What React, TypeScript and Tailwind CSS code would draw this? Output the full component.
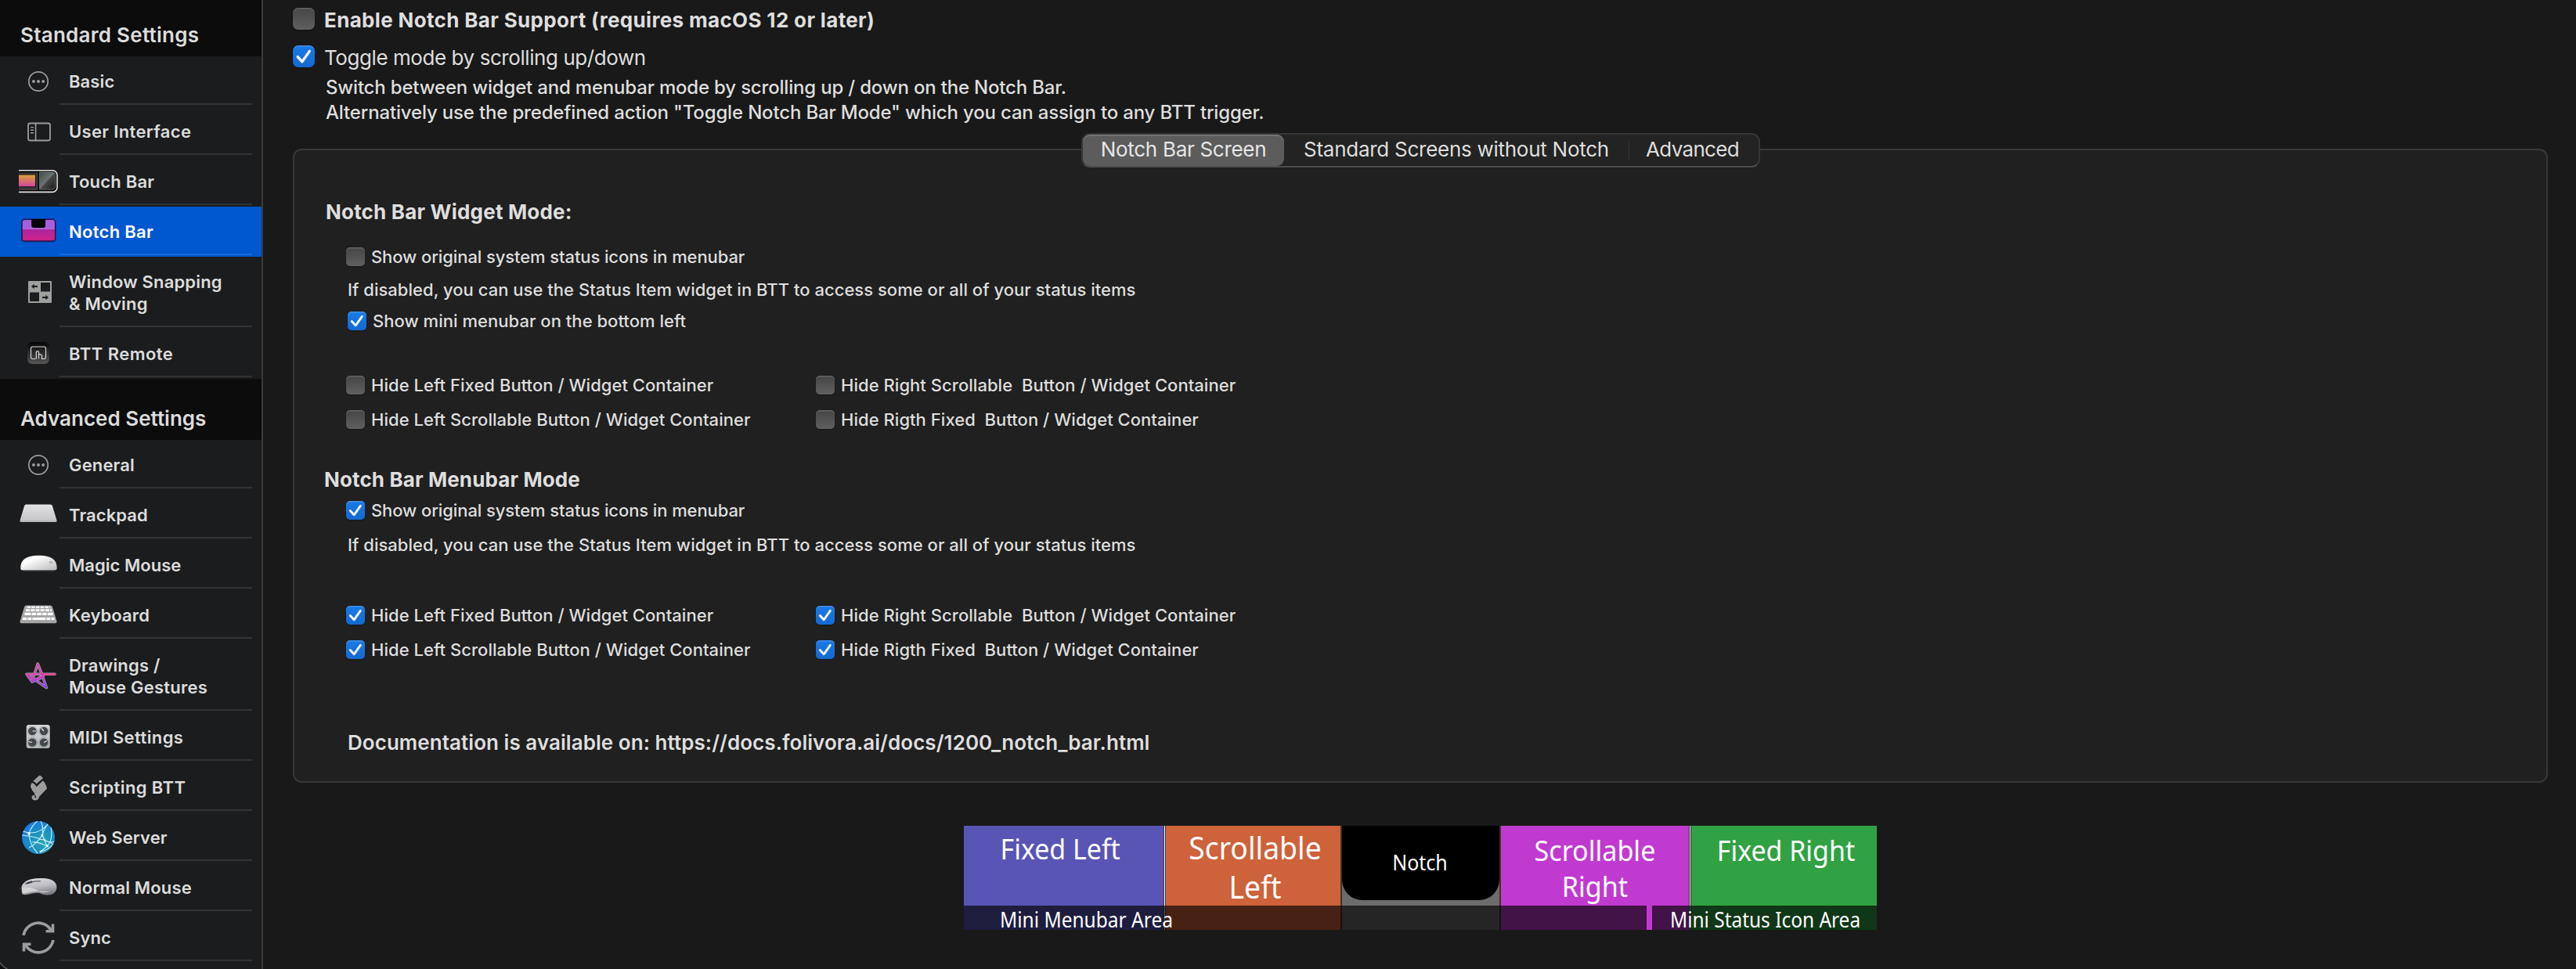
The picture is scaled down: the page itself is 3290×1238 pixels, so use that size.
import type { ReactNode } from "react";
import { clsx } from "clsx";

/* ---------- Sidebar icons, all drawn on a 50×50 grid ---------- */

function Icon({ children }: { children: ReactNode }) {
  return (
    <svg className="h-[50px] w-[50px] shrink-0" viewBox="0 0 50 50" fill="none">
      {children}
    </svg>
  );
}

const DotsIcon = () => (
  <Icon>
    <circle cx="25" cy="25" r="12.2" stroke="#9b9c9c" strokeWidth="1.7" />
    <circle cx="18.9" cy="25" r="2" fill="#9b9c9c" />
    <circle cx="25" cy="25" r="2" fill="#9b9c9c" />
    <circle cx="31.1" cy="25" r="2" fill="#9b9c9c" />
  </Icon>
);

const SidebarIcon = () => (
  <Icon>
    <rect x="12" y="14.5" width="28" height="22" rx="2.5" stroke="#9b9c9c" strokeWidth="1.8" />
    <path d="M21.6 14.5V36.5" stroke="#9b9c9c" strokeWidth="1.6" />
    <path d="M15 19.6h4M15 23.2h4M15 26.8h4" stroke="#9b9c9c" strokeWidth="1.4" />
  </Icon>
);

const TouchBarIcon = () => (
  <Icon>
    <defs>
      <linearGradient id="tb-strip" x1="0" y1="0" x2="0" y2="1">
        <stop offset="0" stopColor="#dca03c" />
        <stop offset="1" stopColor="#d2479c" />
      </linearGradient>
      <linearGradient id="tb-key" x1="0" y1="0" x2="1" y2="1">
        <stop offset="0" stopColor="#434a4b" />
        <stop offset=".48" stopColor="#687576" />
        <stop offset=".52" stopColor="#464646" />
        <stop offset="1" stopColor="#1c1c1c" />
      </linearGradient>
    </defs>
    <path d="M0 10.8H43a6 6 0 0 1 6 6V32.4a6 6 0 0 1-6 6H0Z" fill="#050505" />
    <path d="M0 10.8H43a6 6 0 0 1 6 6V32.4a6 6 0 0 1-6 6H0" stroke="#e4e4e4" strokeWidth="1.6" />
    <path d="M0 13.5H24.5V36H0Z" fill="#3a3a3a" />
    <path d="M0 15.5H22V32.3H0Z" fill="#111" />
    <path d="M0 16.5H21V31.2H0Z" fill="url(#tb-strip)" />
    <path d="M26.5 13H43a3.5 3.5 0 0 1 3.5 3.5V31.5a3.5 3.5 0 0 1-3.5 3.5H26.5Z" fill="url(#tb-key)" stroke="#777" strokeWidth=".8" />
  </Icon>
);

const NotchBarIcon = () => (
  <Icon>
    <defs>
      <linearGradient id="nb-body" x1="0" y1="0" x2="0" y2="1">
        <stop offset="0" stopColor="#8d2cb4" />
        <stop offset="1" stopColor="#cf2189" />
      </linearGradient>
    </defs>
    <rect x="3" y="10" width="44.5" height="29" rx="4" fill="#000" opacity=".25" />
    <rect x="4" y="9.3" width="42.6" height="27.6" rx="3.5" fill="url(#nb-body)" />
    <path d="M4 21V12.8a3.5 3.5 0 0 1 3.5-3.5H43.1a3.5 3.5 0 0 1 3.5 3.5V21Z" fill="#a35fdd" />
    <path d="M4.5 21.3H46" stroke="#c07ad8" strokeWidth="1" />
    <rect x="4" y="9.3" width="42.6" height="27.6" rx="3.5" stroke="#2c0f45" strokeWidth="1.4" />
    <path d="M16.2 9H34v8a3 3 0 0 1-3 3H19.2a3 3 0 0 1-3-3Z" fill="#000" />
  </Icon>
);

const SnappingIcon = () => (
  <Icon>
    <rect x="12" y="10" width="30" height="28" rx="1" fill="#9ea09e" />
    <rect x="28" y="12" width="12" height="11.5" fill="#1b1c1e" />
    <rect x="14" y="24.5" width="12" height="11.5" fill="#1b1c1e" />
    <path d="M16 17l3.6-3.2v2.3H24v1.8h-4.4v2.3ZM38 31l-3.6-3.2v2.3H30v1.8h4.4v2.3Z" fill="#1b1c1e" />
  </Icon>
);

const RemoteIcon = () => (
  <Icon>
    <defs>
      <linearGradient id="btt-bg" x1="0" y1="0" x2="0" y2="1">
        <stop offset="0" stopColor="#050505" />
        <stop offset="1" stopColor="#565656" />
      </linearGradient>
    </defs>
    <rect x="11" y="10" width="28" height="28" rx="6" fill="url(#btt-bg)" />
    <path
      d="M21.5 31.5H17.8a2.3 2.3 0 0 1-2.3-2.3V18.3a2.3 2.3 0 0 1 2.3-2.3H32.2a2.3 2.3 0 0 1 2.3 2.3V29.2a2.3 2.3 0 0 1-2.3 2.3H29.5V27.5c-.3-1.7-2-2-4-2.2V23c0-1.8-3.2-1.8-3.2 0v8.5M25.5 25.5v5.8"
      stroke="#d8d8d8"
      strokeWidth="1.2"
    />
  </Icon>
);

const TrackpadIcon = () => (
  <Icon>
    <defs>
      <linearGradient id="tp" x1="0" y1="0" x2="0" y2="1">
        <stop offset="0" stopColor="#e3e3e5" />
        <stop offset="1" stopColor="#c3c3c5" />
      </linearGradient>
    </defs>
    <path d="M9.5 11.5H40.5a2.5 2.5 0 0 1 2.4 1.7L48.4 31.5Q48.9 34 46.8 34H3.2Q1.1 34 1.6 31.5L7.1 13.2a2.5 2.5 0 0 1 2.4-1.7Z" fill="url(#tp)" />
    <path d="M1.8 33H48.2" stroke="#a5a5a5" strokeWidth="1.2" />
  </Icon>
);

const MagicMouseIcon = () => (
  <Icon>
    <defs>
      <linearGradient id="mm" x1="0" y1="0" x2="1" y2="1">
        <stop offset=".3" stopColor="#fdfdfd" />
        <stop offset="1" stopColor="#b9b9b9" />
      </linearGradient>
    </defs>
    <path d="M2.3 29.5C2 20 7 12.8 25.5 12.8S49 20 48.6 29.5Q48.5 31.5 46 31.5H5Q2.4 31.5 2.3 29.5Z" fill="url(#mm)" />
    <path d="M6 32H45" stroke="#6b6b6b" strokeWidth=".8" />
    <ellipse cx="41" cy="21.5" rx="2.3" ry="1.7" fill="#b4b4b4" />
  </Icon>
);

const KeyboardIcon = () => (
  <Icon>
    <path d="M9.5 12.5H40.5a2.5 2.5 0 0 1 2.4 1.7L48.4 32.5Q48.9 35.3 46.8 35.3H3.2Q1.1 35.3 1.6 32.5L7.1 14.2a2.5 2.5 0 0 1 2.4-1.7Z" fill="#a6a6a6" />
    <path d="M10.5 14.8H40" stroke="#fff" strokeWidth="2" strokeDasharray="4.6 1.1" />
    <path d="M9 18.7H42" stroke="#fff" strokeWidth="2.8" strokeDasharray="5 1.2" />
    <path d="M7.5 23.4H43.5" stroke="#fff" strokeWidth="3.4" strokeDasharray="8 1.2 5.5 1.2 5.5 1.2 5.5 1.2 9" />
    <path d="M5 29.6H45.5" stroke="#fff" strokeWidth="3" strokeDasharray="5 1.2 5 1.2 17 1.2 4.7 1.2 7" />
  </Icon>
);

const STAR = "M46 22.3H10L35.3 39.5L29.5 22.5L24.2 9L17 32L34 22.3M17 32L10 22.3M17 32L29.5 26.5";

const DrawingIcon = () => (
  <Icon>
    <defs>
      <linearGradient id="dr" x1="0" y1="8" x2="0" y2="40" gradientUnits="userSpaceOnUse">
        <stop offset="0" stopColor="#d93fae" />
        <stop offset=".45" stopColor="#d742b4" />
        <stop offset="1" stopColor="#7b3df0" />
      </linearGradient>
    </defs>
    <g strokeLinejoin="round" strokeLinecap="round">
      <path d={STAR} stroke="#cfc6d6" strokeWidth="3.6" opacity=".75" />
      <path d={STAR} stroke="url(#dr)" strokeWidth="2" />
      <path d="M31 22.3H46" stroke="#e04886" strokeWidth="2.3" />
    </g>
  </Icon>
);

const MidiIcon = () => (
  <Icon>
    <defs>
      <linearGradient id="midi" x1="0" y1="0" x2="0" y2="1">
        <stop offset="0" stopColor="#d6dadd" />
        <stop offset="1" stopColor="#b0b5b8" />
      </linearGradient>
    </defs>
    <rect x="9.7" y="9" width="30" height="30" rx="3" fill="url(#midi)" />
    <g stroke="#7b7f82" strokeWidth=".9" strokeDasharray="1 1">
      <circle cx="17.3" cy="17" r="6.3" />
      <circle cx="32" cy="17" r="6.3" />
      <circle cx="17.3" cy="31.5" r="6.3" />
      <circle cx="32" cy="31.5" r="6.3" />
    </g>
    <g fill="#44484b">
      <circle cx="17.3" cy="17" r="5.3" />
      <circle cx="32" cy="17" r="5.3" />
      <circle cx="17.3" cy="31.5" r="5.3" />
      <circle cx="32" cy="31.5" r="5.3" />
    </g>
    <path d="M17.5 17h4.5M32 17l-3-3.5M17 31.5l-4.5-.8M32 31.5l4-2" stroke="#e8e8e8" strokeWidth="1.2" />
  </Icon>
);

const ScriptIcon = () => (
  <Icon>
    <g fill="#9b9c9b">
      <path d="M18 17.3L25.5 10.3Q27 9.3 28.5 10.5L31 13.3L22.5 20.5Q20.5 17.3 18 17.3Z" />
      <path d="M17 19Q15 20.5 15 24Q16.5 29 20.5 33L19.5 35Q16.5 34.5 16.5 38Q17 41.5 21.5 41.5Q25.5 41 26 37L36 26.5Q34.5 19 30.5 16.5L22.5 24.5Q21 20.5 17 19Z" />
    </g>
    <path d="M19.7 35Q22.5 36 20.8 38.5" stroke="#1b1c1e" strokeWidth="1.2" />
  </Icon>
);

const GlobeIcon = () => (
  <Icon>
    <defs>
      <radialGradient id="globe" cx=".6" cy=".62" r=".65">
        <stop offset="0" stopColor="#2aa7b0" />
        <stop offset=".55" stopColor="#1a8fc0" />
        <stop offset="1" stopColor="#1b7be0" />
      </radialGradient>
      <clipPath id="globe-clip">
        <circle cx="25" cy="25" r="21" />
      </clipPath>
    </defs>
    <circle cx="25" cy="25" r="21" fill="url(#globe)" />
    <g clipPath="url(#globe-clip)" stroke="#c9f1fb" strokeWidth="1.1">
      <path d="M5 17Q24 24 38 7M4 22Q26 24 46 34M13 20Q14 35 24 45M13 20Q16 10 24 4M30 22Q32 12 28 4M30 22Q22 34 13 38M30 22Q34 34 46 30M30 22L36 36M36 36Q44 28 41 12M36 36Q24 30 17 31M36 36L28 43M38 7Q32 14 30 22M28 43Q38 41 43 34" />
    </g>
    <g fill="#fff">
      <circle cx="13" cy="20" r="1.7" />
      <circle cx="30" cy="22" r="1.5" />
      <circle cx="36.5" cy="36" r="1.5" />
      <circle cx="28" cy="43" r="1.5" />
    </g>
  </Icon>
);

const MouseIcon = () => (
  <Icon>
    <defs>
      <linearGradient id="nm" x1=".3" y1="0" x2=".6" y2="1">
        <stop offset="0" stopColor="#dcdce0" />
        <stop offset=".5" stopColor="#bcbcc2" />
        <stop offset="1" stopColor="#77777d" />
      </linearGradient>
    </defs>
    <path d="M0 26H4" stroke="#3c3c3e" strokeWidth="1.2" />
    <path d="M3.5 24Q6 15 22 13.3Q40 11.5 46 18Q50 23 47.5 29Q44 35 36 34.5Q30 34 27 32Q20 31 13 33.5Q5 35.5 3.8 32Z" fill="url(#nm)" />
    <path d="M4.3 25Q3.8 31 6 33Q14 30 27 29.5L40 30Q34 32 27 30.5Q20 24 4.3 25Z" fill="#dedee2" opacity=".75" />
    <path d="M8 20.5Q16 16.5 28 16.8" stroke="#6a6a70" strokeWidth="1.6" />
    <path d="M10 19.7L17 17.5" stroke="#44444a" strokeWidth="2.4" />
  </Icon>
);

const SyncIcon = () => (
  <Icon>
    <g stroke="#9b9c9b" strokeWidth="3.6">
      <path d="M6 22A19.3 19.3 0 0 1 41.5 15.5" />
      <path d="M43.5 7.5V16.7H34.5" />
      <path d="M44 28A19.3 19.3 0 0 1 8.5 34.5" />
      <path d="M6.5 42.5V33.3H15.5" />
    </g>
  </Icon>
);

/* ---------- Sidebar ---------- */

type Item = { label: ReactNode; icon: ReactNode; tracking: string; selected?: boolean; tall?: boolean };

const standardItems: Item[] = [
  { label: "Basic", icon: <DotsIcon />, tracking: "tracking-[0.1px]" },
  { label: "User Interface", icon: <SidebarIcon />, tracking: "tracking-[0.35px]" },
  { label: "Touch Bar", icon: <TouchBarIcon />, tracking: "tracking-[0.2px]" },
  { label: "Notch Bar", icon: <NotchBarIcon />, tracking: "tracking-[0.3px]", selected: true },
  { label: <>Window Snapping<br />&amp; Moving</>, icon: <SnappingIcon />, tracking: "tracking-[0.16px]", tall: true },
  { label: "BTT Remote", icon: <RemoteIcon />, tracking: "tracking-[0.45px]" },
];

const advancedItems: Item[] = [
  { label: "General", icon: <DotsIcon />, tracking: "tracking-[0.15px]" },
  { label: "Trackpad", icon: <TrackpadIcon />, tracking: "tracking-[0.1px]" },
  { label: "Magic Mouse", icon: <MagicMouseIcon />, tracking: "tracking-[0.02px]" },
  { label: "Keyboard", icon: <KeyboardIcon />, tracking: "tracking-[0.1px]" },
  { label: <>Drawings /<br />Mouse Gestures</>, icon: <DrawingIcon />, tracking: "tracking-[0.22px]", tall: true },
  { label: "MIDI Settings", icon: <MidiIcon />, tracking: "tracking-[0.4px]" },
  { label: "Scripting BTT", icon: <ScriptIcon />, tracking: "tracking-[0.4px]" },
  { label: "Web Server", icon: <GlobeIcon />, tracking: "tracking-[0.15px]" },
  { label: "Normal Mouse", icon: <MouseIcon />, tracking: "tracking-[0.15px]" },
  { label: "Sync", icon: <SyncIcon />, tracking: "tracking-[0.1px]" },
];

function SidebarRow({ label, icon, tracking, selected, tall }: Item) {
  return (
    <div className={clsx("flex flex-col", tall ? "h-[92px]" : "h-16", selected && "bg-[#0058d0]")}>
      <div className="flex flex-1 items-center gap-[14px] pl-6 pt-1">
        {icon}
        <span className={clsx("text-[22px] font-semibold leading-7 whitespace-nowrap", tracking, selected ? "text-white" : "text-[#dcdcdc]")}>
          {label}
        </span>
      </div>
      <div className={clsx("mr-3 mb-0.5 ml-[76px] h-0.5", selected ? "bg-[#1a69d5]" : "bg-[#323335]")} />
    </div>
  );
}

function Sidebar() {
  return (
    <aside className="relative flex w-[336px] shrink-0 flex-col border-r-2 border-[#38393a] bg-[#1b1c1e]">
      <h2 className="flex h-[72px] items-center bg-[#0c0c0c] pt-[17px] pl-[26px] text-[26px] font-semibold tracking-[0.26px] text-[#dcdcdc]">
        Standard Settings
      </h2>
      {standardItems.map((item, i) => (
        <SidebarRow key={i} {...item} />
      ))}
      <h2 className="flex h-[78px] items-center bg-[#0c0c0c] pt-[23px] pl-[26px] text-[26px] font-semibold tracking-[0.01px] text-[#dcdcdc]">
        Advanced Settings
      </h2>
      {advancedItems.map((item, i) => (
        <SidebarRow key={i} {...item} />
      ))}
      <svg className="absolute bottom-0 left-0 h-2.5 w-3" viewBox="0 0 12 10" fill="none">
        <path d="M0 2.5Q3.5 8 9 10H0Z" fill="#0c0c0c" />
        <path d="M0 2Q3.5 7.5 9.5 10" stroke="#56575a" strokeWidth="1.8" />
      </svg>
    </aside>
  );
}

/* ---------- Main controls ---------- */

function Checkbox({ checked, large }: { checked?: boolean; large?: boolean }) {
  return (
    <span
      className={clsx(
        "flex shrink-0 items-center justify-center shadow-[inset_0_1.5px_0_rgba(255,255,255,0.17),0_1px_2px_rgba(0,0,0,0.35)]",
        large ? "size-7 rounded-[7px]" : "size-6 rounded-[5px]",
        checked ? "bg-linear-to-b from-[#1a7ae8] to-[#1569cf]" : "bg-linear-to-b from-[#454545] to-[#606060]",
      )}
    >
      {checked && (
        <svg className="size-full" viewBox="0 0 24 24" fill="none">
          <path d="M5.3 12.5L10.2 17.8L18.3 6.3" stroke="#f2f6fc" strokeWidth="2.9" strokeLinecap="round" strokeLinejoin="round" />
        </svg>
      )}
    </span>
  );
}

function Option({ label, checked, className }: { label: string; checked?: boolean; className?: string }) {
  return (
    <label className={clsx("flex h-6 items-center gap-2 text-[22px] leading-6 font-[450] whitespace-pre", className)}>
      <Checkbox checked={checked} />
      {label}
    </label>
  );
}

function ContainerOptions({ checked, className }: { checked?: boolean; className?: string }) {
  return (
    <div className={clsx("ml-[66px] grid grid-cols-[600px_auto] gap-y-5 justify-start tracking-[0.04px]", className)}>
      <Option label="Hide Left Fixed Button / Widget Container" checked={checked} />
      <Option label="Hide Right Scrollable  Button / Widget Container" checked={checked} />
      <Option label="Hide Left Scrollable Button / Widget Container" checked={checked} />
      <Option label="Hide Rigth Fixed  Button / Widget Container" checked={checked} />
    </div>
  );
}

function Segments() {
  return (
    <div className="absolute -top-[22px] left-[1005px] flex h-11 w-[867px] items-center rounded-[11px] border-2 border-[#363636] border-b-[#4c4c4c] bg-[#232323] text-[26px] leading-10 font-[440] whitespace-nowrap">
      <div className="flex h-10 w-[257px] items-center justify-center rounded-[9px] bg-[#5c5c5c] pb-0.5 tracking-[-0.3px] text-[#e6e6e6] shadow-[inset_0_1.5px_0_rgba(255,255,255,0.2)]">
        Notch Bar Screen
      </div>
      <div className="flex h-10 w-[440px] items-center justify-center pb-0.5 tracking-[-0.27px]">Standard Screens without Notch</div>
      <div className="h-6 w-px bg-[#343434]" />
      <div className="flex h-10 flex-1 items-center justify-center pr-1 pb-0.5 tracking-[-0.68px]">Advanced</div>
    </div>
  );
}

function Panel() {
  return (
    <section className="relative mt-[30px] ml-[-2px] flex h-[810px] w-[2880px] flex-col rounded-[11px] border-2 border-[#383838] bg-[#202020]">
      <Segments />
      <h3 className="mt-[63px] ml-10 h-8 text-[26px] leading-8 font-bold tracking-[0.19px]">Notch Bar Widget Mode:</h3>
      <Option className="mt-[29px] ml-[66px] tracking-[-0.1px]" label="Show original system status icons in menubar" />
      <p className="mt-[18px] ml-[68px] h-6 text-[22px] leading-6 font-[450] tracking-[0.025px]">
        If disabled, you can use the Status Item widget in BTT to access some or all of your status items
      </p>
      <Option className="mt-4 ml-[68px] tracking-[0.03px]" label="Show mini menubar on the bottom left" checked />
      <ContainerOptions className="mt-[58px]" />
      <h3 className="mt-[49px] ml-[38px] h-8 text-[26px] leading-8 font-bold tracking-[0.12px]">Notch Bar Menubar Mode</h3>
      <Option className="mt-[11px] ml-[66px] tracking-[-0.1px]" label="Show original system status icons in menubar" checked />
      <p className="mt-5 ml-[68px] h-6 text-[22px] leading-6 font-[450] tracking-[0.025px]">
        If disabled, you can use the Status Item widget in BTT to access some or all of your status items
      </p>
      <ContainerOptions className="mt-[66px]" checked />
      <p className="mt-[91px] ml-[68px] h-8 text-[26px] leading-8 font-semibold tracking-[0.05px]">
        Documentation is available on: https://docs.folivora.ai/docs/1200_notch_bar.html
      </p>
    </section>
  );
}

/* ---------- Bar layout diagram ---------- */

function Diagram() {
  return (
    <figure className="relative mt-[55px] ml-[855px] flex h-[133px] w-[1166px] font-['Noto_Sans',sans-serif] whitespace-nowrap text-white">
      <div className="w-[255px] bg-[#5955b5] text-center text-[35.5px] leading-[48px]">
        <span className="mt-[5px] ml-[-8px] inline-block scale-x-[0.955]">Fixed Left</span>
      </div>
      <div className="w-[3px] border-x border-[#3b3a3d] bg-white" />
      <div className="w-[223px] bg-[#cd623b] text-center text-[39.5px] leading-[50px]">
        <span className="mt-[3px] ml-[5px] block scale-x-[0.945]">
          Scrollable
          <br />
          Left
        </span>
      </div>
      <div className="flex w-[205px] flex-col border-x-2 border-[#3c3330] bg-[#6c6c6c]">
        <div className="flex h-[95px] justify-center rounded-b-[26px] bg-black text-[26.5px] leading-9">
          <span className="mt-[29px] ml-[-2px] scale-x-[0.94]">Notch</span>
        </div>
      </div>
      <div className="w-[240px] bg-[#c13ad0] text-center text-[35.5px] leading-[46px]">
        <span className="mt-[8px] block scale-x-[0.96]">
          Scrollable
          <br />
          Right
        </span>
      </div>
      <div className="w-[3px] border-x border-[#2d2d2d] bg-white" />
      <div className="flex-1 bg-[#31a244] text-center text-[35.5px] leading-[46px]">
        <span className="mt-[8px] ml-[5px] block scale-x-[0.955]">Fixed Right</span>
      </div>

      <div className="absolute inset-x-0 bottom-0 flex h-[31px] text-[26.5px] leading-[37px]">
        <div className="h-full w-[872px] bg-black/66">
          <span className="ml-[46px] inline-block origin-left scale-x-[0.925]">Mini Menubar Area</span>
        </div>
        <div className="w-[7px]" />
        <div className="h-full flex-1 bg-black/66">
          <span className="ml-[23px] inline-block origin-left scale-x-[0.922]">Mini Status Icon Area</span>
        </div>
      </div>
    </figure>
  );
}

export default function App() {
  return (
    <div className="flex h-[1238px] w-[3290px] overflow-hidden bg-[#191919] font-['Inter',sans-serif] text-[#dedede]">
      <Sidebar />
      <main className="flex flex-1 flex-col pl-10">
        <label className="mt-2.5 ml-[-2px] flex h-7 items-center gap-3 text-[26px] font-bold tracking-[0.34px]">
          <Checkbox large />
          <span className="mt-[3px]">Enable Notch Bar Support (requires macOS 12 or later)</span>
        </label>
        <label className="mt-5 ml-[-2px] flex h-7 items-center gap-3 text-[26px] font-[440] tracking-[-0.43px]">
          <Checkbox large checked />
          <span className="mt-[3px]">Toggle mode by scrolling up/down</span>
        </label>
        <div className="mt-[10px] ml-10 h-16 text-[24px] leading-8 font-[450] tracking-[-0.19px]">
          <p>Switch between widget and menubar mode by scrolling up / down on the Notch Bar.</p>
          <p className="tracking-[-0.17px]">
            Alternatively use the predefined action "Toggle Notch Bar Mode" which you can assign to any BTT trigger.
          </p>
        </div>
        <Panel />
        <Diagram />
      </main>
    </div>
  );
}
